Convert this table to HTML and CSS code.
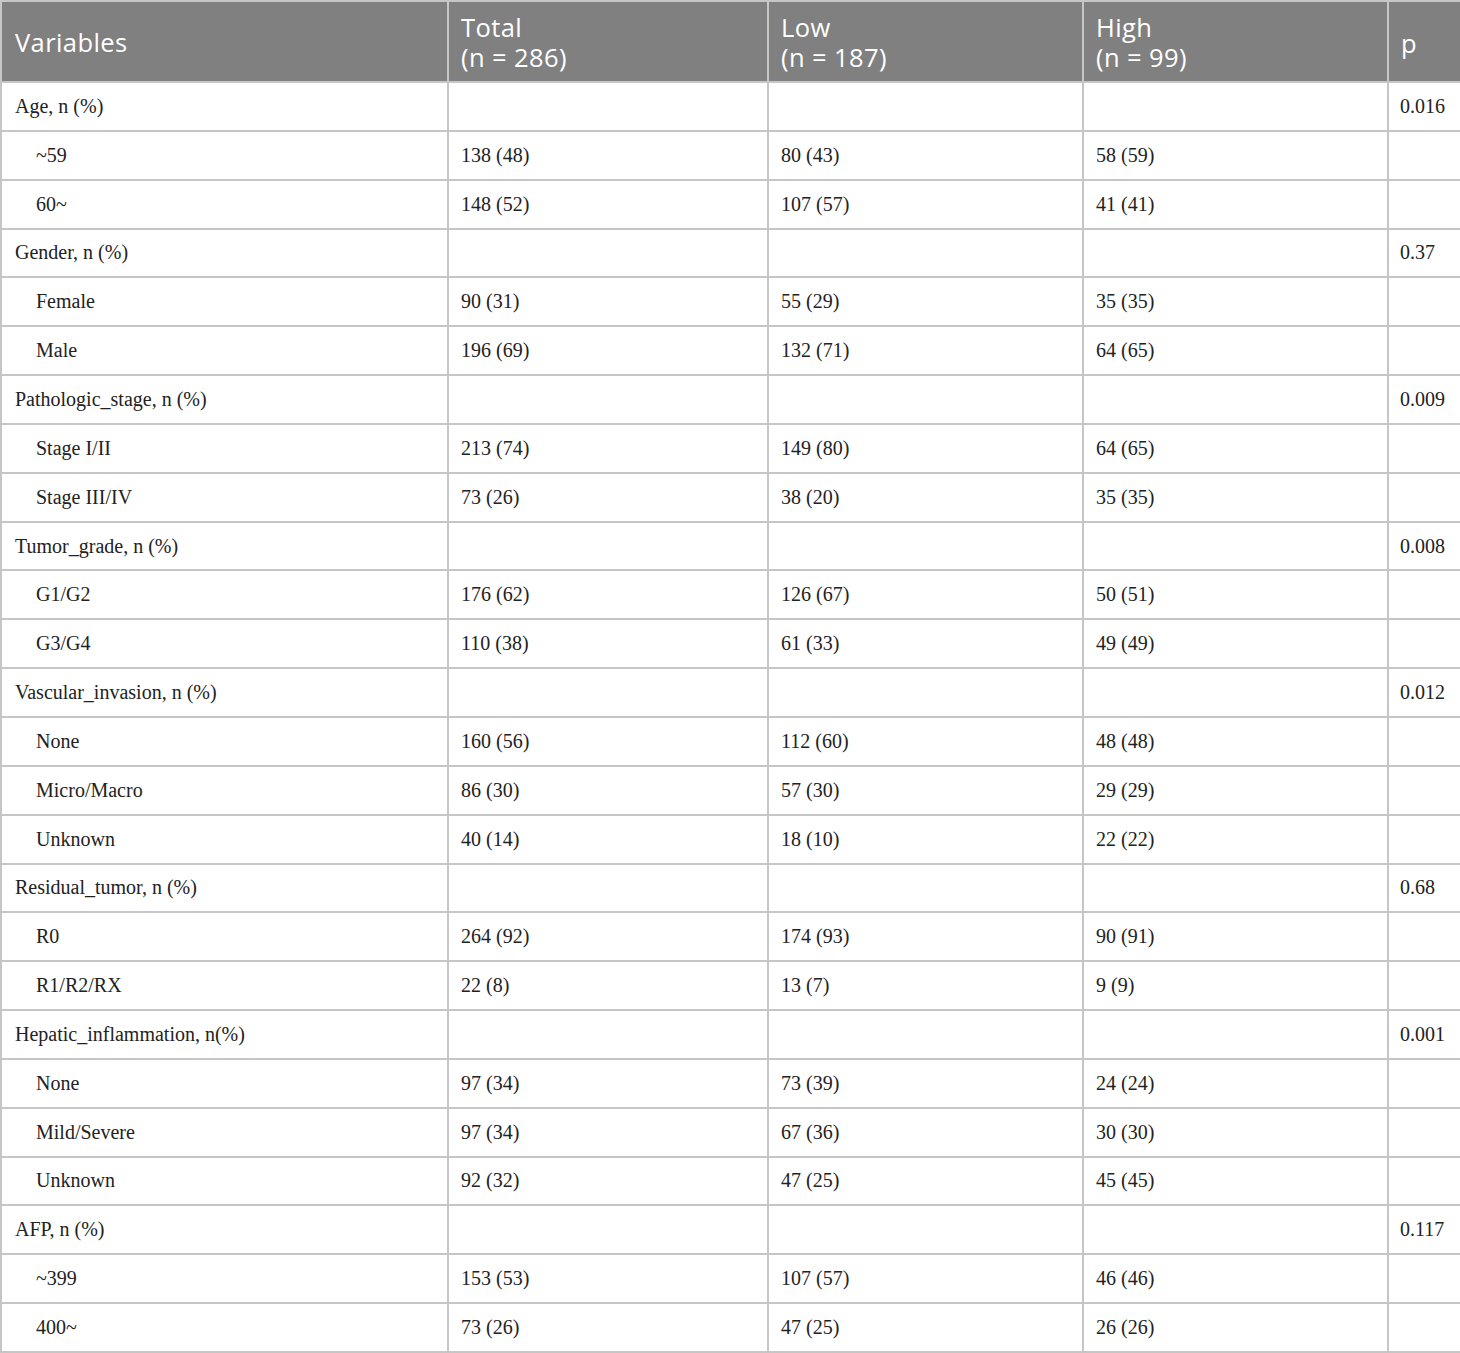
FILE: index.html
```html
<!DOCTYPE html>
<html>
<head>
<meta charset="utf-8">
<link rel="stylesheet" href="styles.css">
</head>
<body>
<table class="tbl">
<colgroup>
<col class="c1"><col class="c2"><col class="c3"><col class="c4"><col class="c5">
</colgroup>
<thead>
<tr><th>Variables</th><th>Total<br>(n = 286)</th><th>Low<br>(n = 187)</th><th>High<br>(n = 99)</th><th>p</th></tr>
</thead>
<tbody>
<tr><td>Age, n (%)</td><td></td><td></td><td></td><td class="p">0.016</td></tr>
<tr><td class="sub">~59</td><td>138 (48)</td><td>80 (43)</td><td>58 (59)</td><td></td></tr>
<tr><td class="sub">60~</td><td>148 (52)</td><td>107 (57)</td><td>41 (41)</td><td></td></tr>
<tr><td>Gender, n (%)</td><td></td><td></td><td></td><td class="p">0.37</td></tr>
<tr><td class="sub">Female</td><td>90 (31)</td><td>55 (29)</td><td>35 (35)</td><td></td></tr>
<tr><td class="sub">Male</td><td>196 (69)</td><td>132 (71)</td><td>64 (65)</td><td></td></tr>
<tr><td>Pathologic_stage, n (%)</td><td></td><td></td><td></td><td class="p">0.009</td></tr>
<tr><td class="sub">Stage I/II</td><td>213 (74)</td><td>149 (80)</td><td>64 (65)</td><td></td></tr>
<tr><td class="sub">Stage III/IV</td><td>73 (26)</td><td>38 (20)</td><td>35 (35)</td><td></td></tr>
<tr><td>Tumor_grade, n (%)</td><td></td><td></td><td></td><td class="p">0.008</td></tr>
<tr><td class="sub">G1/G2</td><td>176 (62)</td><td>126 (67)</td><td>50 (51)</td><td></td></tr>
<tr><td class="sub">G3/G4</td><td>110 (38)</td><td>61 (33)</td><td>49 (49)</td><td></td></tr>
<tr><td>Vascular_invasion, n (%)</td><td></td><td></td><td></td><td class="p">0.012</td></tr>
<tr><td class="sub">None</td><td>160 (56)</td><td>112 (60)</td><td>48 (48)</td><td></td></tr>
<tr><td class="sub">Micro/Macro</td><td>86 (30)</td><td>57 (30)</td><td>29 (29)</td><td></td></tr>
<tr><td class="sub">Unknown</td><td>40 (14)</td><td>18 (10)</td><td>22 (22)</td><td></td></tr>
<tr><td>Residual_tumor, n (%)</td><td></td><td></td><td></td><td class="p">0.68</td></tr>
<tr><td class="sub">R0</td><td>264 (92)</td><td>174 (93)</td><td>90 (91)</td><td></td></tr>
<tr><td class="sub">R1/R2/RX</td><td>22 (8)</td><td>13 (7)</td><td>9 (9)</td><td></td></tr>
<tr><td>Hepatic_inflammation, n(%)</td><td></td><td></td><td></td><td class="p">0.001</td></tr>
<tr><td class="sub">None</td><td>97 (34)</td><td>73 (39)</td><td>24 (24)</td><td></td></tr>
<tr><td class="sub">Mild/Severe</td><td>97 (34)</td><td>67 (36)</td><td>30 (30)</td><td></td></tr>
<tr><td class="sub">Unknown</td><td>92 (32)</td><td>47 (25)</td><td>45 (45)</td><td></td></tr>
<tr><td>AFP, n (%)</td><td></td><td></td><td></td><td class="p">0.117</td></tr>
<tr><td class="sub">~399</td><td>153 (53)</td><td>107 (57)</td><td>46 (46)</td><td></td></tr>
<tr><td class="sub">400~</td><td>73 (26)</td><td>47 (25)</td><td>26 (26)</td><td></td></tr>
</tbody>
</table>
</body>
</html>
```
FILE: styles.css
```css
html, body {
  margin: 0;
  padding: 0;
  background: #ffffff;
}
.tbl {
  width: 1460px;
  border-collapse: collapse;
  table-layout: fixed;
  border: 2px solid #c6c6c6;
}
.c1 { width: 447px; }
.c2 { width: 320px; }
.c3 { width: 315px; }
.c4 { width: 305px; }
.c5 { width: 73px; }
.tbl th {
  background: #808080;
  color: #ffffff;
  font-family: "Open Sans", "Noto Sans", sans-serif;
  font-weight: 400;
  font-size: 25.5px;
  line-height: 30px;
  letter-spacing: 0.4px;
  text-align: left;
  vertical-align: middle;
  height: 81px;
  padding: 0 12px;
  border: 2px solid #c6c6c6;
  box-sizing: border-box;
}
.tbl th:first-child { padding-left: 13px; }
.tbl th:last-child { padding-top: 3px; }
.tbl td {
  font-family: "Liberation Serif", "Times New Roman", serif;
  font-size: 20px;
  color: #222222;
  height: 48.85px;
  padding: 0 12px;
  border: 2px solid #c6c6c6;
  vertical-align: middle;
  box-sizing: border-box;
}
.tbl td:first-child { padding-left: 13px; }
.tbl td.sub { padding-left: 34px; }
.tbl td.p { padding-left: 11px; padding-right: 0; }
```
